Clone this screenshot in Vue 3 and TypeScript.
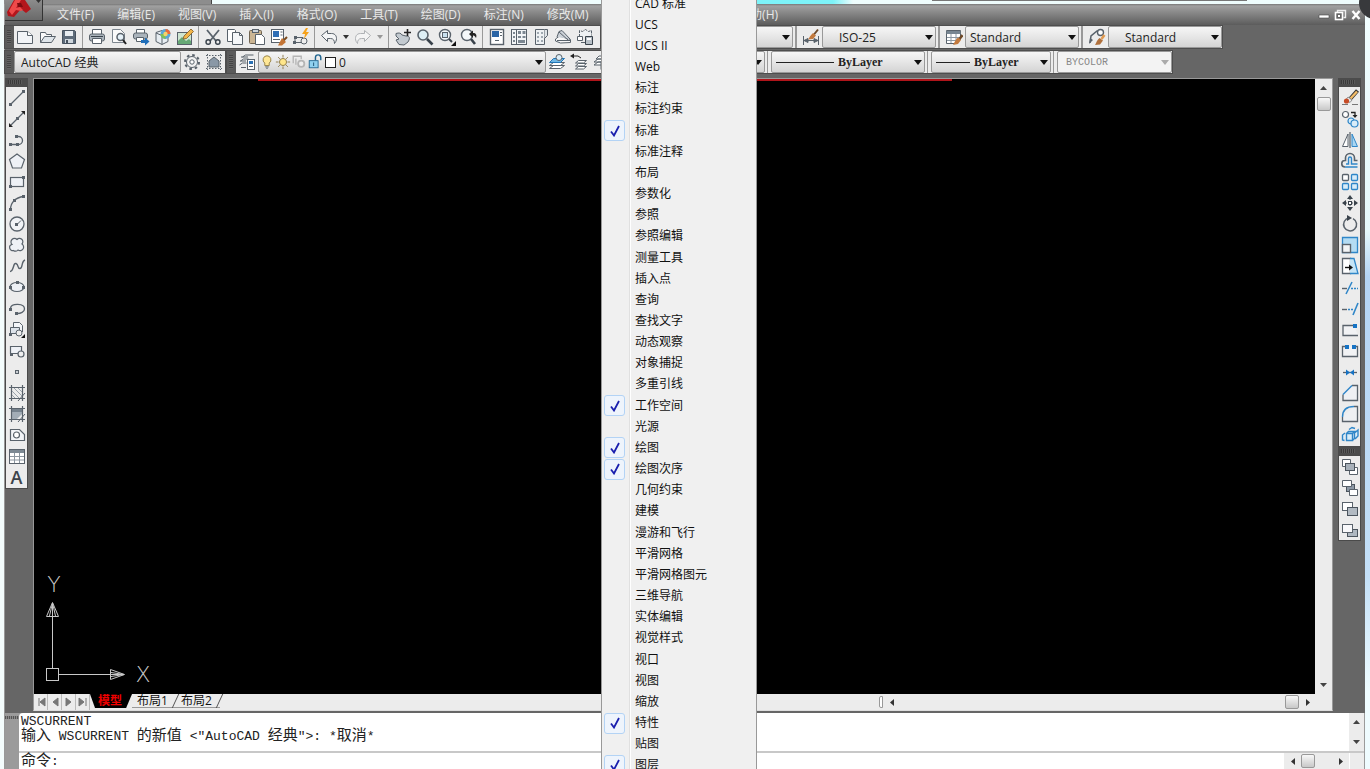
<script setup lang="ts">
import { reactive, ref } from 'vue'

interface Tool {
  icon: string
  label: string
}

const G = '#59626b'
const B = '#2f86c8'
const L = '#d9ecf8'

const node = (x: number, y: number, c = G) =>
  `<rect x="${x - 1}" y="${y - 1}" width="3" height="3" fill="${c}"/>`

const icons: Record<string, string> = {
  new: `<path d="M1.5 3.5h10l5 4v8h-15z" fill="#f2f4f7" stroke="${G}"/><path d="M11.5 3.5v4h5" fill="#fff" stroke="${G}"/>`,
  open: `<path d="M2.5 14.500v-10h5l1 2h5v2" fill="#fafafa" stroke="${G}"/><path d="M2.500 14.500l4-6h11l-4 6z" fill="#dfe5ea" stroke="${G}"/>`,
  save: `<path d="M2.500 2.500h12l1 1v12h-13z" fill="#5d6b7a" stroke="#46525f"/><path d="M5 3h8v5h-8z" fill="#e8edf2"/><path d="M5 11h8v4h-8z" fill="#cfd7de"/><path d="M6 12h2v3h-2z" fill="#46525f"/>`,
  print: `<path d="M4.500 6v-4.500h9v4.500" fill="#fff" stroke="${G}"/><rect x="1.500" y="6" width="15" height="7" rx="2" fill="#aab3bb" stroke="${G}"/><path d="M4.500 10.500h9v5h-9z" fill="#fff" stroke="${G}"/><path d="M3 8.500h12" stroke="#39424b"/>`,
  preview: `<path d="M2.500 1.500h8l4 4v9h-12z" fill="#fafafa" stroke="#7d868f"/><circle cx="10.500" cy="9" r="3.500" fill="#e6f1f8" stroke="${G}" stroke-width="1.500"/><path d="M13 12l3 4" stroke="#222" stroke-width="2"/>`,
  publish: `<path d="M4.500 5v-3.500h8v3.500" fill="#fff" stroke="${G}"/><rect x="1.500" y="5" width="14" height="6" rx="2" fill="#aab3bb" stroke="${G}"/><path d="M4.500 9.500h7v4h-7z" fill="#fff" stroke="${G}"/><path d="M9 12h4v-2.500l4.500 4-4.500 4v-2.500h-4z" fill="#1e6db8"/>`,
  dwf: `<path d="M8 2.500l6 2v9l-6 3-6-3v-9z" fill="#e7edf2" stroke="${G}"/><path d="M2 5l6 2.500v9" fill="none" stroke="${G}"/><circle cx="11.500" cy="6" r="5" fill="#59a7d8"/><path d="M11.500 1a5 5 0 0 1 5 5h-5z" fill="#e86a3b"/><path d="M6.500 6a5 5 0 0 0 5 5v-5z" fill="#7bc05a"/><circle cx="11.500" cy="6" r="2.200" fill="#f4d36a"/>`,
  markup: `<rect x="1.500" y="4.500" width="14" height="12" fill="#cfe6d2" stroke="${G}"/><path d="M2 13l4-4 4 4 3-2 2 2v3h-13z" fill="#66a875"/><path d="M7 11l1-3 7-7 2.500 2.500-7 7z" fill="#f2b54a" stroke="#7c5a26" stroke-width=".8"/>`,
  cut: `<path d="M3 2l9 11M15 2l-9 11" stroke="#59626b" stroke-width="1.800" fill="none"/><circle cx="4.200" cy="14" r="2.200" fill="none" stroke="#39424b" stroke-width="1.400"/><circle cx="13.800" cy="14" r="2.200" fill="none" stroke="#39424b" stroke-width="1.400"/>`,
  copyclip: `<path d="M1.500 1.500h7l1 1v11h-8z" fill="#fff" stroke="${G}"/><path d="M6.500 4.500h7l3 3v9h-10z" fill="#f5f7f9" stroke="${G}"/><path d="M13.500 4.500v3h3" fill="none" stroke="${G}"/>`,
  paste: `<rect x="1.500" y="2.500" width="12" height="13" rx="1" fill="#cbb593" stroke="#6f6350"/><rect x="4.500" y="1.500" width="6" height="3" fill="#ccd3d9" stroke="${G}"/><path d="M7.500 6.500h6l3 3v7h-9z" fill="#fff" stroke="${G}"/>`,
  match: `<rect x="1.500" y="1.500" width="12" height="13" fill="#fff" stroke="${G}"/><path d="M3 3h6v6h-6z" fill="#2f6eb5"/><path d="M3 11.500h7M10.500 4h2M10.500 7h2" stroke="${G}"/><path d="M17 9l-4 4" stroke="#7a4a1e" stroke-width="2"/><path d="M12 10l4 4-4 3.500H8z" fill="#c37435"/>`,
  blockedit: `<path d="M2 14.500h9M3 14v-4.500h8" stroke="${G}" fill="none"/><circle cx="12" cy="13" r="3" fill="#eee" stroke="${G}"/><path d="M1 13h3v3h-3zM2 8h3v3h-3z" fill="${G}"/><path d="M14 0l-4 6h3l-1 5 5-7h-3l2-4z" fill="#f6a21b"/>`,
  undo: `<path d="M1.500 7.500l6-5v3h4c4 0 5 3 5 5s-1 4-2 5c0-3-1-5-4-5h-3v3z" fill="#f4f5f6" stroke="${G}"/>`,
  redo: `<path d="M16.500 7.500l-6-5v3h-4c-4 0-5 3-5 5s1 4 2 5c0-3 1-5 4-5h3v3z" fill="#f4f4f4" stroke="#aeb1b4"/>`,
  pan: `<path d="M2 5.500c3-1 5-.5 6 1.500l4 1c3 0 4 1 3 4l-1 2-4 3-5-.5L2 12l3-1-3-3z" fill="#c3cad0" stroke="${G}"/><path d="M13.500 1v7M10 4.500h7" stroke="#222" stroke-width="1.600"/>`,
  zoom: `<circle cx="7" cy="7" r="5" fill="#deeff5" stroke="${G}" stroke-width="1.600"/><path d="M11 11l5.500 5.500" stroke="#39424b" stroke-width="2.600"/>`,
  zoomwin: `<circle cx="7" cy="7" r="5.500" fill="#f4f8fa" stroke="${G}" stroke-width="1.400"/><rect x="4.500" y="4.500" width="5" height="5" fill="#c9e0ee" stroke="${G}"/><path d="M11 11l3 3" stroke="#39424b" stroke-width="2"/><path d="M18 13v5h-5z" fill="#111"/>`,
  zoomprev: `<circle cx="7" cy="7" r="5.500" fill="#f4f8fa" stroke="${G}" stroke-width="1.400"/><path d="M11 11l4 5" stroke="#39424b" stroke-width="2.600"/><path d="M9 6l4-3.500V5c3 0 4 2 3 5-1-2-2-2.500-3-2.500V10z" fill="#222"/>`,
  props: `<rect x="2.500" y="1.500" width="13" height="15" fill="#fff" stroke="${G}" stroke-width="1.400"/><path d="M4 3h7v6h-7z" fill="#2c65a5"/><path d="M12 4.500h2M12 7.500h2M7 12.500h4" stroke="${G}"/>`,
  center: `<rect x="1.500" y="1.500" width="15" height="15" fill="#f3f5f7" stroke="${G}"/><path d="M3 4h2v2h-2zM3 8h2v2h-2zM3 12h2v2h-2zM8 3h3v3h-3zM12.500 3h3v3h-3zM8 8h3v2h-3zM12.500 8h3v2h-3zM8 12h7v3h-7z" fill="#7c8791"/><path d="M6.500 2v15" stroke="${G}"/>`,
  palettes: `<path d="M3.500 1.500h9v15h-9z" fill="#eef1f3" stroke="${G}"/><path d="M12.500 1.500h3v6l-3 3" fill="#dfe4e8" stroke="${G}"/><path d="M5 4h2v2h-2zM9 4h2v2h-2zM5 8h2v2h-2zM9 8h2v2h-2zM5 12h2v2h-2zM9 12h2v2h-2z" fill="#a0a9b1"/>`,
  sheets: `<path d="M1.500 11l4-3 11 3.500v3l-10 .5-5-2z" fill="#f7f7f7" stroke="${G}"/><path d="M3 9l2-5.500 3-1 8 8.500" fill="#ccd2d8" stroke="${G}"/><path d="M5 4l9 8M3 12.500h13" fill="none" stroke="${G}"/>`,
  markupset: `<path d="M3.500 9V2.500l3 1 3-2 3 2 3-1v5" fill="#eef1f3" stroke="${G}" stroke-dasharray="3 1"/><path d="M1.500 8.500h5v4h-5zM5 14.500h4" stroke="${G}" fill="#fff"/><path d="M9.500 8.500h7v8h-7z" fill="#b8c0c7" stroke="#39424b"/><path d="M11 10h4v2h-4z" fill="#fff"/>`,
  gear: `<circle cx="9" cy="9" r="5.500" fill="#f2f2f2" stroke="${G}"/><circle cx="9" cy="9" r="7" fill="none" stroke="${G}" stroke-width="2" stroke-dasharray="2.600 2.900"/><circle cx="9" cy="9" r="2.200" fill="#fff" stroke="${G}"/>`,
  wsnap: `<path d="M4 14V8l5-4 5 4v6z" fill="#8a98a6" stroke="${G}"/><path d="M2.500 1v16M15.500 1v16M1 2.500h16M1 15.500h16" stroke="${G}" stroke-dasharray="1.500 1.500"/>`,
  layers: `<path d="M4.500 4l3-2h8M2.500 8l3-2h5M1.500 12l3-2h4M3 14.500h5M3 4h7M2 8h6" stroke="${G}" fill="none"/><rect x="9.500" y="6.500" width="7" height="10" fill="#fff" stroke="${G}"/><path d="M11 8h4v3h-4z" fill="#2b71b4"/><path d="M11 13.500h4" stroke="${G}"/>`,
  bulb: `<path d="M9 2a4.500 4.500 0 0 0-2.500 8.200V13h5v-2.800A4.500 4.500 0 0 0 9 2z" fill="#ffe795" stroke="#8f7a3c"/><path d="M7 14.500h4M8 16h2" stroke="${G}"/>`,
  sun: `<circle cx="9" cy="9" r="4" fill="#ffe68a" stroke="#8a7544"/><path d="M9 1v3M9 14v3M1 9h3M14 9h3M3.500 3.500l2 2M12.500 12.500l2 2M14.500 3.500l-2 2M3.500 14.500l2-2" stroke="#8a7544"/>`,
  vpfreeze: `<path d="M2.500 10.500v-8h9v3M5.500 5v7" fill="none" stroke="#b5b5b5" stroke-width="1.500"/><circle cx="11.500" cy="11" r="3.500" fill="#eee" stroke="#b5b5b5" stroke-width="2"/>`,
  lock: `<rect x="2.500" y="7.500" width="10" height="8" fill="#8fd0ef" stroke="#21658f"/><path d="M9.500 7V4a3 3 0 0 1 6 0v3" fill="none" stroke="#21658f" stroke-width="1.600"/><path d="M7 9.500h1v4h-1z" fill="#174b6c"/>`,
  laycur: `<path d="M1.500 15.500l4-3h11l-4 3zM1.500 12.500l4-3h11l-4 3z" fill="#fff" stroke="${G}"/><path d="M1.500 9.500l4-4h11l-4 4z" fill="#6fb8e6" stroke="#2275b5"/><circle cx="11" cy="4.500" r="3" fill="#dceef8" stroke="${G}"/>`,
  layprev: `<path d="M5.500 16l3-2.500h8l-3 2.500zM5.500 13l3-2.500h8l-3 2.500zM5.500 10l3-2.500h8l-3 2.500z" fill="#fff" stroke="${G}"/><path d="M3 3h5l3 2" stroke="#222" fill="none"/><path d="M0 3l4-2.500v5z" fill="#222"/>`,
  laystate: `<path d="M2 12l4-3h10l-4 3zM2 9l4-3h10l-4 3zM4 6l3-3h8l-3 3z" fill="#fff" stroke="${G}"/><rect x="9" y="9" width="7" height="7" fill="#b7c2cb" stroke="${G}"/>`,
  dimstyle: `<path d="M1.500 8v9M16.500 8v9M2 12.500h14M2 12.500l4-2v4zM16 12.500l-4-2v4z" stroke="${G}" fill="${G}"/><path d="M16 1.500l-4 5" stroke="#6e4a2a" stroke-width="2"/><path d="M11 5l3 2.500-3 3.500-5 .5c1-1 2-4 5-6.500z" fill="#c37a3e"/>`,
  tablestyle: `<path d="M1.500 2.500h14v9l-4 4h-10z" fill="#fff" stroke="${G}"/><path d="M1.500 3h14v3h-14z" fill="#788692"/><path d="M6 6v9M11 6v6M2 9.500h13M2 12.500h10" stroke="#8c98a3"/><path d="M17.500 7l-3 4" stroke="#6e4a2a" stroke-width="2.500"/><path d="M13 9.500l3 2.500-3 4-5 1c1-1 2-5 5-7.500z" fill="#c37a3e"/>`,
  mleader: `<path d="M2 15l1-7 6-5h2" stroke="${G}" fill="none" stroke-width="1.500"/><path d="M1 16l1-6 3 2z" fill="${G}"/><circle cx="12.500" cy="4.500" r="3" fill="#fff" stroke="${G}" stroke-width="1.400"/><path d="M16.500 7l-3 4" stroke="#e09a50" stroke-width="2.500"/><path d="M11.500 10l3.500 2.500-3 4-5 .5c1-1 1.500-4.500 4.500-7z" fill="#b0703c"/>`,
  line: `<path d="M2.500 15.500l13-13" stroke="${G}" stroke-width="1.300"/>${node(2, 15)}${node(15, 2)}`,
  xline: `<path d="M2 16l14-14" stroke="${G}" stroke-width="1.300"/><path d="M17 1v4l-4-4zM1 17v-4l4 4z" fill="#222"/>${node(9, 8)}`,
  pline: `<path d="M2.500 13.500h8a4 4 0 0 0 0-8h-2" stroke="${G}" fill="none" stroke-width="1.300"/>${node(2, 13)}${node(9, 13)}${node(8, 5)}`,
  polygon: `<path d="M9 2l7.500 5.500-3 8.500h-9l-3-8.500z" fill="#eef1f6" stroke="${G}" stroke-width="1.200"/>`,
  rect: `<rect x="2.500" y="4.500" width="13" height="9" fill="#eef1f6" stroke="${G}" stroke-width="1.200"/>${node(2, 13)}${node(15, 4)}`,
  arc: `<path d="M2.500 15.500c0-7 5-12 13-13" stroke="${G}" fill="none" stroke-width="1.300"/>${node(2, 15)}${node(6, 6)}${node(15, 2)}`,
  circle: `<circle cx="9" cy="9" r="7" fill="#f1f3f6" stroke="${G}" stroke-width="1.300"/><path d="M9 9.500l4-4" stroke="${G}"/>${node(8, 9)}`,
  cloud: `<path d="M9 3.500a3.200 3.200 0 1 1 5 4.500 3.300 3.300 0 1 1-4 6 3.200 3.200 0 0 1-4.500.5 3 3 0 1 1-1.500-6A3.200 3.200 0 1 1 9 3.500z" fill="#eef1f6" stroke="${G}" stroke-width="1.200"/>`,
  spline: `<path d="M2 14.500c4 0 3-9 6-8s1 5 4 5 1-7 5-8.500" stroke="${G}" fill="none" stroke-width="1.400"/>`,
  ellipse: `<ellipse cx="9" cy="9" rx="7" ry="4.500" fill="#eef1f6" stroke="${G}" stroke-width="1.200"/>${node(2, 9)}${node(15, 9)}${node(9, 4)}`,
  ellarc: `<path d="M2.500 8c1-5 14-5 14 1 0 3-4 4.500-7 4.500" stroke="${G}" fill="none" stroke-width="1.300"/>${node(2, 9)}${node(8, 13)}`,
  insert: `<path d="M5.500 7V1.500h6l3 3V11" fill="#f3f5f8" stroke="${G}"/><path d="M2.500 6.500h9v6h-9z" fill="#dde3ea" stroke="${G}"/><circle cx="11" cy="12" r="3" fill="#eee" stroke="${G}"/>${node(2, 13)}<path d="M17 13v4h-4z" fill="#111"/>`,
  block: `<path d="M2.500 4.500h11v7h-11z" fill="#eef1f6" stroke="${G}" stroke-width="1.200"/><circle cx="13" cy="12" r="3" fill="#eee" stroke="${G}" stroke-width="1.200"/>${node(3, 12)}`,
  point: `<rect x="7.500" y="7.500" width="3" height="3" fill="#c9ced3" stroke="${G}"/>`,
  hatch: `<path d="M3.500 1v16M14.500 1v16M1 3.500h16M1 14.500h16" stroke="${G}" stroke-width="1.200"/><path d="M4 7l7 7M4 11l3 3M6 4l8 8M10 4l4 4" stroke="#9aa3ab"/><path d="M17 9l-7 8" stroke="${G}"/>`,
  gradient: `<path d="M4 4h10v5l-5 5H4z" fill="#a3adb6"/><path d="M4 4h10v3H4z" fill="#76828d"/><path d="M3.500 1v16M14.500 1v16M1 3.500h16M1 14.500h16" stroke="${G}" stroke-width="1.200"/><path d="M17 9l-7 8" stroke="${G}"/>`,
  region: `<path d="M2.500 3.500h9l5 5v6h-14z" fill="#f3f5f8" stroke="${G}" stroke-width="1.200"/><circle cx="8.500" cy="9" r="3" fill="#fff" stroke="${G}" stroke-width="1.200"/>`,
  table: `<rect x="1.500" y="2.500" width="15" height="14" fill="#fff" stroke="${G}"/><path d="M2 3h14v3H2z" fill="#7d8993"/><path d="M6.500 6v10M11.500 6v10M2 9.500h14M2 13h14" stroke="#8c969f"/>`,
  erase: `<path d="M16.500 1.500l-7 8" stroke="#333" stroke-width="4"/><path d="M16 2.500l-6.500 7" stroke="#f3bc68" stroke-width="2.400"/><path d="M7 8l4 3-2 2.500-4-3z" fill="#e8e8e8" stroke="#555" stroke-width=".6"/><circle cx="5.500" cy="12" r="2.600" fill="#c64b25"/><path d="M1 15.500h6M11 15.500h6" stroke="#777"/>`,
  copy: `<circle cx="4.500" cy="4.500" r="3" fill="#fff" stroke="${G}" stroke-width="1.200"/><path d="M10 2.500h4v3" stroke="#222" fill="none" stroke-width="1.300"/><path d="M11.500 5h5l-2.500 3z" fill="#222"/><circle cx="10" cy="11" r="3" fill="${L}" stroke="${B}" stroke-width="1.200"/><circle cx="13.500" cy="13.500" r="3.500" fill="${L}" stroke="${B}" stroke-width="1.200"/>`,
  mirror: `<path d="M7 3v12.500H1.500z" fill="#fff" stroke="${G}"/><path d="M11 3v12.500h5.500z" fill="#a9d6f2" stroke="${B}"/><path d="M9 1v16" stroke="#39424b"/>`,
  offset: `<path d="M16.500 8.500h-3V6a4.500 4.500 0 0 0-9 0v2.500H4a3 3 0 0 0 0 6.500" stroke="${G}" fill="none" stroke-width="1.600"/><path d="M16.500 12h-6V6.500a1.500 1.500 0 0 0-3 0V12H5M4 15h12.500" stroke="${B}" fill="none" stroke-width="1.400"/>`,
  array: `<rect x="1.500" y="1.500" width="6" height="6" rx="1" fill="#fff" stroke="${G}" stroke-width="1.300"/><g fill="${L}" stroke="${B}" stroke-width="1.300"><rect x="10.500" y="1.500" width="6" height="6" rx="1"/><rect x="1.500" y="10.500" width="6" height="6" rx="1"/><rect x="10.500" y="10.500" width="6" height="6" rx="1"/></g>`,
  move: `<path d="M9 1l3 4H6zM9 17l3-4H6zM1 9l4-3v6zM17 9l-4-3v6z" fill="#39424b"/><path d="M9 4v10M4 9h10" stroke="#39424b" stroke-dasharray="2 1"/><rect x="7.500" y="7.500" width="3" height="3" fill="#fff" stroke="#39424b"/>`,
  rotate: `<path d="M8 3a6.500 6.500 0 1 0 4 .6" stroke="${G}" fill="none" stroke-width="1.500"/><path d="M6 0l5 3-5 3z" fill="#39424b"/>`,
  scale: `<path d="M1.500 1.500h15v15h-15z" fill="#b4dcf3" stroke="${B}" stroke-width="1.300"/><rect x="1.500" y="8.500" width="8" height="8" fill="#f2f4f5" stroke="${G}" stroke-width="1.400"/>`,
  stretch: `<path d="M1.500 1.500h8v15h-8z" fill="#fff" stroke="${G}" stroke-width="1.300"/><path d="M9 1.500h4l4 15H9" fill="#c5e4f6" stroke="${B}" stroke-width="1.300"/><path d="M4 10.500h5" stroke="#111" stroke-width="1.400"/><path d="M8 7.500l4 3-4 3z" fill="#111"/>`,
  trim: `<path d="M1 9.500h5" stroke="${G}" stroke-width="1.400"/><path d="M10 9.500h7" stroke="${B}" stroke-dasharray="2 1" stroke-width="1.400"/><path d="M5 15l6-12" stroke="${B}" stroke-width="1.600"/>`,
  extend: `<path d="M1 9.500h5" stroke="${G}" stroke-width="1.400"/><path d="M7 9.500h5" stroke="${B}" stroke-dasharray="2 1" stroke-width="1.400"/><path d="M12 15l5-12" stroke="${B}" stroke-width="1.600"/>`,
  breakpt: `<path d="M13 4.500H2v10h15" fill="#f1f2f4" stroke="${G}" stroke-width="1.300"/><rect x="12" y="3" width="4" height="4" fill="#1673c4"/>`,
  break: `<path d="M4 4.500H1.500v10h15v-10H14" fill="#f1f2f4" stroke="${G}" stroke-width="1.300"/><path d="M4 3h4v4H4zM11 3h4v4h-4z" fill="#1673c4"/>`,
  join: `<path d="M2 9.500h14" stroke="${G}" stroke-width="1.300"/><path d="M5 6.500l4 3-4 3zM13 6.500l-4 3 4 3z" fill="#1673c4"/>`,
  chamfer: `<path d="M2 10.500v6h14.500v-15H11" fill="#eef0f3" stroke="${G}" stroke-width="1.300"/><path d="M2 10.500l9-9" stroke="${B}" stroke-width="1.500"/>`,
  fillet: `<path d="M1.500 12v4.500h15v-15H13" fill="#eef0f3" stroke="${G}" stroke-width="1.300"/><path d="M1.500 12C1.500 5 6 1.500 13 1.500" stroke="${B}" fill="none" stroke-width="1.500"/>`,
  explode: `<g fill="${L}" stroke="${B}" stroke-width="1.400"><path d="M5.500 7.500h6v7h-6zM5.500 7.500l2-2h6l-2 2M11.500 14.500l2-2v-7M4 7L1.500 9v5l2 .5M8 3.500l3-2 3 1M13.500 7l3.500-3v6l-3 3"/></g>`,
  front: `<path d="M1.500 1.500h8v7h-8zM8.500 9.500h8v7h-8z" fill="#fff" stroke="${G}"/><rect x="4.500" y="5.500" width="9" height="7" fill="#a7b0b9" stroke="#4b545d"/>`,
  back: `<rect x="5.500" y="5.500" width="8" height="7" fill="#8d99a6" stroke="#4b545d"/><path d="M1.500 1.500h9v6h-9zM8.500 10.500h8v6h-8z" fill="#fff" stroke="${G}"/>`,
  above: `<rect x="1.500" y="2.500" width="10" height="8" fill="#fff" stroke="${G}"/><rect x="6.500" y="7.500" width="10" height="8" fill="#b2bac2" stroke="#4b545d"/>`,
  under: `<rect x="6.500" y="8.500" width="10" height="7" fill="#aeb7c0" stroke="#4b545d"/><rect x="1.500" y="3.500" width="10" height="8" fill="#f8f8fa" stroke="${G}"/>`,
}

const menus = [
  '文件(F)', '编辑(E)', '视图(V)', '插入(I)', '格式(O)', '工具(T)',
  '绘图(D)', '标注(N)', '修改(M)', '参数(P)', '窗口(W)', '帮助(H)',
]

const t = (pairs: string): Tool[] =>
  pairs.split(' ').map((p) => {
    const [icon, label] = p.split(':')
    return { icon, label }
  })

const standardGroups: Tool[][] = [
  t('new:新建 open:打开 save:保存'),
  t('print:打印 preview:打印预览 publish:发布 dwf:三维DWF markup:标记'),
  t('cut:剪切 copyclip:复制到剪贴板 paste:粘贴 match:特性匹配 blockedit:块编辑器'),
  t('undo:放弃 redo:重做'),
  t('pan:实时平移 zoom:实时缩放 zoomwin:窗口缩放 zoomprev:缩放上一个'),
  t('props:特性 center:设计中心 palettes:工具选项板 sheets:图纸集管理器 markupset:标记集管理器'),
]
const workspaceTools = t('gear:工作空间设置 wsnap:我的工作空间')
const layerTools = t('laycur:置为当前图层 layprev:上一个图层 laystate:图层状态管理器')
const layerFlags = ['bulb', 'sun', 'vpfreeze', 'lock']

const drawTools = t(
  'line:直线 xline:构造线 pline:多段线 polygon:多边形 rect:矩形 arc:圆弧 circle:圆 cloud:修订云线 spline:样条曲线 ellipse:椭圆 ellarc:椭圆弧 insert:插入块 block:创建块 point:点 hatch:图案填充 gradient:渐变色 region:面域 table:表格',
)
const modifyTools = t(
  'erase:删除 copy:复制 mirror:镜像 offset:偏移 array:阵列 move:移动 rotate:旋转 scale:缩放 stretch:拉伸 trim:修剪 extend:延伸 breakpt:打断于点 break:打断 join:合并 chamfer:倒角 fillet:圆角 explode:分解',
)
const orderTools = t('front:前置 back:后置 above:置于对象之上 under:置于对象之下')

const styleBoxes = [
  { icon: 'dimstyle', label: '标注样式', value: 'ISO-25', indent: true },
  { icon: 'tablestyle', label: '表格样式', value: 'Standard', indent: false },
  { icon: 'mleader', label: '多重引线样式', value: 'Standard', indent: true },
]

const checked = ['标准', '工作空间', '绘图', '绘图次序', '特性', '图层']
const toolbars = reactive(
  [
    'CAD 标准', 'UCS', 'UCS II', 'Web', '标注', '标注约束', '标准', '标准注释', '布局', '参数化',
    '参照', '参照编辑', '测量工具', '插入点', '查询', '查找文字', '动态观察', '对象捕捉', '多重引线',
    '工作空间', '光源', '绘图', '绘图次序', '几何约束', '建模', '漫游和飞行', '平滑网格',
    '平滑网格图元', '三维导航', '实体编辑', '视觉样式', '视口', '视图', '缩放', '特性', '贴图', '图层',
  ].map((name) => ({ name, on: checked.includes(name) })),
)

const navPaths = [
  'M3 1v8M9 1L4 5l5 4z',
  'M8 1L3 5l5 4z',
  'M2 1l5 4-5 4z',
  'M1 1l5 4-5 4zM8 1v8',
]
const navLabels = ['第一个', '上一个', '下一个', '最后一个']
const tabs = ['模型', '布局1', '布局2']
const activeTab = ref('模型')
const command = ref('')
</script>

<template>
  <div class="screen">
    <div class="glass">
      <div class="glass-title"></div>
      <div class="glass-glow"></div>
      <div class="glass-line"></div>
    </div>

    <div class="app">
      <button class="logo" aria-label="应用程序菜单">
        <svg width="38" height="20" viewBox="0 0 38 20">
          <path d="M2 12L9 0h11l6 9-5 4-5-4-7 8-6-1z" fill="#b3161c" />
          <path d="M4 11L10 0h6l-5 8 4-1 3 3-2 1-5-1-4 5z" fill="#ee4a4a" />
          <path d="M12 3h4l2 4h-5z" fill="#7c0c11" />
          <path d="M31 0h5l-2.500 3z" fill="#333" />
        </svg>
      </button>

      <nav class="menubar">
        <button v-for="m in menus" :key="m" class="menu-title">{{ m }}</button>
        <div class="window-buttons">
          <button aria-label="最小化"><svg width="14" height="12" viewBox="0 0 14 12"><path d="M2 6h10v3H2z" fill="#fff" stroke="#444" stroke-width=".6" /></svg></button>
          <button aria-label="还原"><svg width="14" height="12" viewBox="0 0 14 12"><path d="M4.500 3.500v-2h8v7h-2" fill="none" stroke="#eee" stroke-width="1.400" /><rect x="2.500" y="3.500" width="7" height="7" fill="#666" stroke="#fff" stroke-width="1.600" /><path d="M5 6h2v2H5z" fill="#fff" /></svg></button>
          <button aria-label="关闭"><svg width="14" height="12" viewBox="0 0 14 12"><path d="M3.500 2l7 8M10.500 2l-7 8" stroke="#fff" stroke-width="2.400" /></svg></button>
        </div>
      </nav>

      <div class="bars">
        <div class="bar-row">
          <div class="bar standard">
            <span class="grip"></span>
            <template v-for="(group, gi) in standardGroups" :key="gi">
              <span v-if="gi" class="sep"></span>
              <template v-for="tool in group" :key="tool.icon">
                <button class="tool" :aria-label="tool.label">
                  <svg width="18" height="18" viewBox="0 0 18 18" v-html="icons[tool.icon]"></svg>
                </button>
                <button v-if="gi === 3" class="drop" :class="{ dim: tool.icon === 'redo' }" :aria-label="tool.label + '列表'">
                  <svg width="6" height="4" viewBox="0 0 6 4"><path d="M0 0h6L3 4z" fill="currentColor" /></svg>
                </button>
              </template>
            </template>
          </div>
          <div class="bar styles">
            <div class="combo text-style">
              <select aria-label="文字样式"></select>
              <svg class="arrow" width="8" height="5" viewBox="0 0 8 5"><path d="M0 0h8L4 5z" /></svg>
            </div>
            <template v-for="s in styleBoxes" :key="s.label">
              <span class="sep"></span>
              <button class="tool" :aria-label="s.label + '管理'">
                <svg width="18" height="18" viewBox="0 0 18 18" v-html="icons[s.icon]"></svg>
              </button>
              <div class="combo style-box" :class="{ indent: s.indent }">
                <select :aria-label="s.label"><option>{{ s.value }}</option></select>
                <svg class="arrow" width="8" height="5" viewBox="0 0 8 5"><path d="M0 0h8L4 5z" /></svg>
              </div>
            </template>
          </div>
        </div>

        <div class="bar-row">
          <div class="bar">
            <span class="grip"></span>
            <div class="combo workspace">
              <select aria-label="工作空间"><option>AutoCAD 经典</option></select>
              <svg class="arrow" width="8" height="5" viewBox="0 0 8 5"><path d="M0 0h8L4 5z" /></svg>
            </div>
            <button v-for="tool in workspaceTools" :key="tool.icon" class="tool" :aria-label="tool.label">
              <svg width="18" height="18" viewBox="0 0 18 18" v-html="icons[tool.icon]"></svg>
            </button>
          </div>
          <div class="bar layers">
            <span class="grip"></span>
            <button class="tool" aria-label="图层特性管理器">
              <svg width="18" height="18" viewBox="0 0 18 18" v-html="icons.layers"></svg>
            </button>
            <div class="combo layer">
              <svg v-for="f in layerFlags" :key="f" width="16" height="16" viewBox="0 0 18 18" v-html="icons[f]"></svg>
              <span class="swatch"></span>
              <select aria-label="图层"><option>0</option></select>
              <svg class="arrow" width="8" height="5" viewBox="0 0 8 5"><path d="M0 0h8L4 5z" /></svg>
            </div>
            <button v-for="tool in layerTools" :key="tool.icon" class="tool" :aria-label="tool.label">
              <svg width="18" height="18" viewBox="0 0 18 18" v-html="icons[tool.icon]"></svg>
            </button>
          </div>
          <div class="bar properties">
            <div class="combo color">
              <select aria-label="颜色"></select>
              <svg class="arrow" width="8" height="5" viewBox="0 0 8 5"><path d="M0 0h8L4 5z" /></svg>
            </div>
            <span class="sep"></span>
            <div class="combo linetype serif">
              <span class="rule"></span>
              <select aria-label="线型"><option>ByLayer</option></select>
              <svg class="arrow" width="8" height="5" viewBox="0 0 8 5"><path d="M0 0h8L4 5z" /></svg>
            </div>
            <span class="sep"></span>
            <div class="combo lineweight serif">
              <span class="rule"></span>
              <select aria-label="线宽"><option>ByLayer</option></select>
              <svg class="arrow" width="8" height="5" viewBox="0 0 8 5"><path d="M0 0h8L4 5z" /></svg>
            </div>
            <span class="sep"></span>
            <div class="combo plot disabled">
              <select aria-label="打印样式" disabled><option>BYCOLOR</option></select>
              <svg class="arrow" width="8" height="5" viewBox="0 0 8 5"><path d="M0 0h8L4 5z" /></svg>
            </div>
          </div>
        </div>
      </div>

      <main class="work">
        <div class="side">
          <div class="vgrip"></div>
          <div class="vbar draw">
            <button v-for="tool in drawTools" :key="tool.icon" :aria-label="tool.label">
              <svg width="18" height="18" viewBox="0 0 18 18" v-html="icons[tool.icon]"></svg>
            </button>
            <button class="letter" aria-label="多行文字">A</button>
          </div>
        </div>

        <section class="drawing">
          <div class="canvas-row">
            <div class="canvas">
              <div class="red-line"></div>
              <svg class="ucs" width="120" height="120" viewBox="0 0 120 120" fill="none" stroke="#c8c8c8">
                <rect x="12.500" y="95.500" width="12" height="12" />
                <path d="M18.500 95V44M25 101.500h51" />
                <path d="M18.500 29.500l-6 14h12zM18.500 30l-3 13M18.500 30v13M18.500 30l3 13" />
                <path d="M90.500 101.500l-14-5v10zM90 101.500l-13-2M90 101.500H77M90 101.500l-13 2" />
                <text x="20" y="19" class="axis">Y</text>
                <text x="109" y="109" class="axis">X</text>
              </svg>
            </div>
            <div class="vscroll">
              <button aria-label="向上"><svg width="7" height="4" viewBox="0 0 7 4"><path d="M0 4h7L3.500 0z" fill="#444" /></svg></button>
              <span class="thumb"></span>
              <span class="space"></span>
              <button aria-label="向下"><svg width="7" height="4" viewBox="0 0 7 4"><path d="M0 0h7L3.500 4z" fill="#444" /></svg></button>
            </div>
          </div>
          <div class="tab-row">
            <button v-for="(p, i) in navPaths" :key="p" class="nav" :aria-label="navLabels[i]">
              <svg width="10" height="10" viewBox="0 0 10 10"><path :d="p" fill="#777" stroke="#777" /></svg>
            </button>
            <button
              v-for="name in tabs"
              :key="name"
              class="tab"
              :class="{ active: name === activeTab }"
              @click="activeTab = name"
            >{{ name }}</button>
            <div class="hscroll">
              <span class="split"></span>
              <button aria-label="向左"><svg width="4" height="7" viewBox="0 0 4 7"><path d="M4 0v7L0 3.500z" fill="#333" /></svg></button>
              <span class="space"></span>
              <span class="thumb"></span>
              <button aria-label="向右"><svg width="4" height="7" viewBox="0 0 4 7"><path d="M0 0v7l4-3.500z" fill="#333" /></svg></button>
              <span class="corner"></span>
            </div>
          </div>
        </section>

        <div class="side">
          <div class="vgrip"></div>
          <div class="vbar modify">
            <button v-for="tool in modifyTools" :key="tool.icon" :aria-label="tool.label">
              <svg width="18" height="18" viewBox="0 0 18 18" v-html="icons[tool.icon]"></svg>
            </button>
          </div>
          <div class="vgrip"></div>
          <div class="vbar order">
            <button v-for="tool in orderTools" :key="tool.icon" :aria-label="tool.label">
              <svg width="18" height="18" viewBox="0 0 18 18" v-html="icons[tool.icon]"></svg>
            </button>
          </div>
        </div>
      </main>

      <section class="command">
        <div class="command-grip"></div>
        <div class="command-body">
          <div class="history">
            <div class="history-text">
              <div>WSCURRENT</div>
              <div><b>输入</b> WSCURRENT <b>的新值</b> &lt;"AutoCAD <b>经典</b>"&gt;: *<b>取消</b>*</div>
            </div>
            <div class="vscroll small">
              <button aria-label="向上滚动"><svg width="7" height="4" viewBox="0 0 7 4"><path d="M0 4h7L3.500 0z" fill="#444" /></svg></button>
              <span class="space"></span>
              <button aria-label="向下滚动"><svg width="7" height="4" viewBox="0 0 7 4"><path d="M0 0h7L3.500 4z" fill="#444" /></svg></button>
            </div>
          </div>
          <div class="prompt">
            <label for="command-line"><b>命令</b>:</label>
            <input id="command-line" v-model="command" type="text" />
            <div class="hscroll prompt-scroll">
              <button aria-label="向左滚动"><svg width="4" height="7" viewBox="0 0 4 7"><path d="M4 0v7L0 3.500z" fill="#333" /></svg></button>
              <span class="thumb"></span>
              <span class="space"></span>
              <button aria-label="向右滚动"><svg width="4" height="7" viewBox="0 0 4 7"><path d="M0 0v7l4-3.500z" fill="#333" /></svg></button>
            </div>
            <span class="prompt-corner"></span>
          </div>
        </div>
      </section>
    </div>

    <div class="popup" role="menu">
      <button
        v-for="item in toolbars"
        :key="item.name"
        class="popup-item"
        role="menuitemcheckbox"
        :aria-checked="item.on"
        @click="item.on = !item.on"
      >
        <span class="check" :class="{ on: item.on }">
          <svg v-if="item.on" width="10" height="12" viewBox="0 0 10 12"><path d="M1 6.500l3 4L9 1" fill="none" stroke="#1a1fae" stroke-width="1.800" /></svg>
        </span>
        <span class="popup-label">{{ item.name }}</span>
      </button>
    </div>
    <div class="badge"></div>
  </div>
</template>

<style>
html,
body {
  margin: 0;
  height: 100%;
  overflow: hidden;
}
</style>

<style scoped>
.screen {
  position: relative;
  display: flex;
  flex-direction: column;
  height: 100vh;
  overflow: hidden;
  box-sizing: border-box;
  padding: 0 5px 0 4px;
  background: linear-gradient(#f2feff 0%, #e6f9fb 30%, #b4d4f4 36%, #c4e0f8 75%, #effcff 90%);
  font-family: "Open Sans", "Noto Sans CJK SC", sans-serif;
  font-size: 12px;
  color: #222;
}
.screen::before {
  content: "";
  position: absolute;
  left: 0;
  top: 0;
  bottom: 0;
  width: 4px;
  background: #f4fdfd;
}
button,
select,
input {
  font: inherit;
  color: inherit;
  border: 0;
  padding: 0;
  margin: 0;
  background: none;
  outline: 0;
}
svg {
  display: block;
  flex: none;
}
.glass {
  flex: none;
  height: 4px;
  display: flex;
  background: #eefcfc;
}
.glass-title {
  width: 207px;
  background: #8d8d8d;
  border-right: 1px solid #444;
}
.glass-glow {
  margin-left: 541px;
  width: 100px;
  background: linear-gradient(90deg, #7df3f8 80%, #eefcfc);
}
.glass-line {
  margin-left: 79px;
  width: 315px;
  height: 1px;
  background: #777;
}
.app {
  position: relative;
  flex: 1;
  min-height: 0;
  display: flex;
  flex-direction: column;
  background: #666;
  border-left: 1px solid #999;
  box-sizing: border-box;
}
.logo {
  position: absolute;
  left: 0;
  top: -4px;
  width: 38px;
  height: 21px;
  overflow: hidden;
  background: linear-gradient(#8c8c8c, #6a6a6a);
  border-right: 1px solid #333;
  border-bottom: 1px solid #333;
}
.menubar {
  flex: none;
  height: 21px;
  display: flex;
  align-items: center;
  gap: 23px;
  padding-left: 52px;
  background: linear-gradient(#777 0, #a0a0a0 2px, #5c5c5c);
  white-space: nowrap;
}
.menu-title {
  color: #e8e8e8;
  line-height: 20px;
}
.window-buttons {
  margin-left: auto;
  display: flex;
  gap: 2px;
  padding-right: 2px;
}
.bars {
  flex: none;
  display: flex;
  flex-direction: column;
  gap: 3px;
  padding: 1px 0 5px;
}
.bar-row {
  display: flex;
  height: 22px;
}
.bar {
  display: flex;
  flex: none;
  align-items: stretch;
  background: #ececec;
  box-shadow: 0 0 0 1px #4e4e4e;
}
.standard {
  padding-right: 4px;
}
.grip {
  width: 9px;
  box-sizing: border-box;
  border: 2px solid #5a5a5a;
  border-width: 4px 3px 4px 2px;
  background: repeating-linear-gradient(#444 0 1px, #646464 1px 2px);
}
.tool {
  width: 22px;
  display: flex;
  align-items: center;
  justify-content: center;
}
.sep {
  width: 6px;
  box-sizing: border-box;
  border-left: 2px solid transparent;
  border-right: 3px solid transparent;
  background: #999 content-box;
  background-clip: padding-box;
}
.drop {
  width: 12px;
  color: #333;
  display: flex;
  align-items: center;
  justify-content: center;
}
.drop.dim {
  color: #999;
}
.styles {
  margin-left: 15px;
}
.styles .sep {
  width: 7px;
}
.combo {
  display: flex;
  align-items: center;
  box-sizing: border-box;
  border: 1px solid #999;
  border-radius: 2px;
  background: linear-gradient(#f6f6f6, #e6e6e6 50%, #d4d4d4);
  padding-right: 2px;
}
.combo select {
  flex: 1;
  min-width: 0;
  height: 20px;
  appearance: none;
  padding-left: 6px;
}
.arrow {
  fill: #111;
}
.text-style {
  width: 178px;
}
.style-box {
  width: 114px;
}
.style-box select {
  padding-left: 4px;
}
.indent select {
  padding-left: 16px;
}
.workspace {
  width: 167px;
}
.layers {
  margin-left: 2px;
}
.layer {
  width: 288px;
}
.layer select {
  padding-left: 3px;
}
.swatch {
  width: 11px;
  height: 11px;
  box-sizing: border-box;
  margin-left: 2px;
  border: 1px solid #222;
  background: #fff;
}
.properties {
  margin-left: 14px;
}
.color {
  width: 139px;
}
.linetype {
  width: 154px;
}
.lineweight {
  width: 120px;
}
.plot {
  width: 115px;
}
.serif {
  font-family: "Liberation Serif", serif;
  font-size: 12px;
  font-weight: 700;
  color: #222;
}
.serif select {
  padding-left: 4px;
}
.rule {
  width: 58px;
  height: 1px;
  margin-left: 4px;
  background: #222;
}
.lineweight .rule {
  width: 34px;
}
.disabled {
  background: #f3f3f3;
  font-family: "Liberation Mono", monospace;
  font-size: 10px;
  color: #888;
}
.disabled select {
  padding-left: 8px;
  opacity: 1;
}
.disabled .arrow {
  fill: #aaa;
}
.work {
  flex: 1;
  min-height: 0;
  display: flex;
  justify-content: space-between;
}
.side {
  flex: none;
  width: 23px;
}
.side:last-child {
  margin-right: 4px;
}
.vgrip {
  height: 8px;
  box-sizing: border-box;
  border: 2px solid #4c4c4c;
  border-width: 2px 6px 2px 3px;
  background: repeating-linear-gradient(90deg, #3a3a3a 0 1px, #5a5a5a 1px 2px);
}
.vbar {
  display: grid;
  grid-auto-rows: 1fr;
  box-sizing: border-box;
  background: #ececec;
  border: 1px solid #4a4a4a;
}
.vbar button {
  display: flex;
  align-items: center;
  justify-content: center;
  min-height: 0;
}
.vbar .letter {
  font-size: 18px;
  font-weight: 600;
  line-height: 20px;
  color: #3c434a;
}
.draw {
  height: 403px;
}
.modify {
  height: 361px;
}
.order {
  height: 86px;
}
.drawing {
  flex: 1;
  min-width: 0;
  margin: 0 5px;
  margin-bottom: 2px;
  display: flex;
  flex-direction: column;
  border: 1px solid #999;
  border-bottom-color: #ddd;
}
.canvas-row {
  flex: 1;
  min-height: 0;
  display: flex;
}
.canvas {
  flex: 1;
  display: flex;
  flex-direction: column;
  justify-content: space-between;
  background: #000;
}
.red-line {
  height: 2px;
  width: 694px;
  margin-left: 224px;
  background: #b0141a;
}
.ucs {
  margin-bottom: 1px;
}
.axis {
  font-family: "DejaVu Sans Light", "DejaVu Sans", sans-serif;
  font-size: 22px;
  font-weight: 200;
  fill: #c8c8c8;
  stroke: none;
  text-anchor: middle;
}
.vscroll {
  flex: none;
  width: 17px;
  display: flex;
  flex-direction: column;
  align-items: center;
  background: #ececec;
}
.vscroll button {
  height: 18px;
  display: flex;
  align-items: center;
}
.space {
  flex: 1;
}
.thumb {
  width: 14px;
  height: 14px;
  box-sizing: border-box;
  border: 1px solid #999;
  border-radius: 2px;
  background: linear-gradient(#f8f8f8, #c8c8c8);
}
.tab-row {
  flex: none;
  height: 16px;
  display: flex;
  background: #ececec;
}
.nav {
  width: 14px;
  display: flex;
  align-items: center;
  justify-content: center;
  border-right: 1px solid #bbb;
  box-sizing: border-box;
}
.tab {
  position: relative;
  padding: 0 8px 0 5px;
  line-height: 14px;
  height: 14px;
  color: #111;
  border-bottom: 1px solid #999;
}
.tab::after {
  content: "";
  position: absolute;
  right: 0;
  top: 0;
  width: 1px;
  height: 14px;
  background: #555;
  transform: skewX(-25deg);
}
.tab.active {
  background: #000;
  color: #f00000;
  font-weight: 700;
  padding: 0 10px 0 8px;
  border-bottom: 0;
  clip-path: polygon(0 0, 100% 0, 86% 100%, 12% 100%);
}
.hscroll {
  display: flex;
  align-items: center;
  background: #ececec;
}
.tab-row .hscroll {
  margin-left: auto;
  width: 453px;
}
.hscroll button {
  width: 17px;
  display: flex;
  justify-content: center;
}
.split {
  width: 4px;
  height: 12px;
  box-sizing: border-box;
  border: 1px solid #999;
  border-radius: 2px 0 0 2px;
  background: #fff;
}
.corner {
  width: 16px;
}
.command {
  flex: none;
  height: 56px;
  display: flex;
  background: #9b9b9b;
}
.command-grip {
  width: 14px;
  height: 3px;
  margin-top: 3px;
  background: repeating-linear-gradient(90deg, #555 0 1px, #8a8a8a 1px 2px);
}
.command-body {
  flex: 1;
  display: flex;
  flex-direction: column;
  min-width: 0;
  margin-right: 1px;
  background: #fff;
  border-radius: 4px 0 0 0;
  font-family: "Liberation Mono", "Noto Sans CJK SC", monospace;
  font-size: 13px;
  color: #222;
}
.command-body b {
  font-size: 15px;
  font-weight: 400;
}
.history {
  flex: none;
  height: 40px;
  display: flex;
  border-bottom: 2px solid #c8c8c8;
  box-sizing: border-box;
  overflow: hidden;
}
.history-text {
  flex: 1;
  padding: 1px 0 0 2px;
  line-height: 15px;
  white-space: pre;
}
.vscroll.small {
  width: 15px;
}
.prompt {
  flex: 1;
  min-height: 0;
  display: flex;
  align-items: stretch;
  padding-left: 2px;
  line-height: 18px;
}
.prompt input {
  flex: 1;
  min-width: 0;
}
.prompt-scroll {
  width: 65px;
}
.prompt-corner {
  width: 15px;
  border-left: 1px solid #fff;
  box-sizing: border-box;
  background: #ececec;
}
.popup {
  position: absolute;
  left: 601px;
  top: -7px;
  bottom: -7px;
  width: 156px;
  box-sizing: border-box;
  display: grid;
  grid-auto-rows: 1fr;
  border-left: 1px solid #999;
  border-right: 1px solid #999;
  background: linear-gradient(90deg, transparent 27px, #e0e0e0 27px 28px, #fff 28px 29px, transparent 29px) #f0f0f0;
}
.popup-item {
  display: flex;
  align-items: center;
  min-height: 0;
  text-align: left;
  color: #111;
  white-space: nowrap;
}
.check {
  width: 21px;
  height: 21px;
  box-sizing: border-box;
  margin: 0 10px 0 2px;
  display: flex;
  align-items: center;
  justify-content: center;
}
.check.on {
  border: 1px solid #b3d3f5;
  border-radius: 3px;
  background: #eef4fc;
}
.popup-label {
  line-height: 16px;
}
.badge {
  position: absolute;
  right: -21px;
  top: -13px;
  width: 32px;
  height: 32px;
  border-radius: 50%;
  background: #38393c;
}
</style>
